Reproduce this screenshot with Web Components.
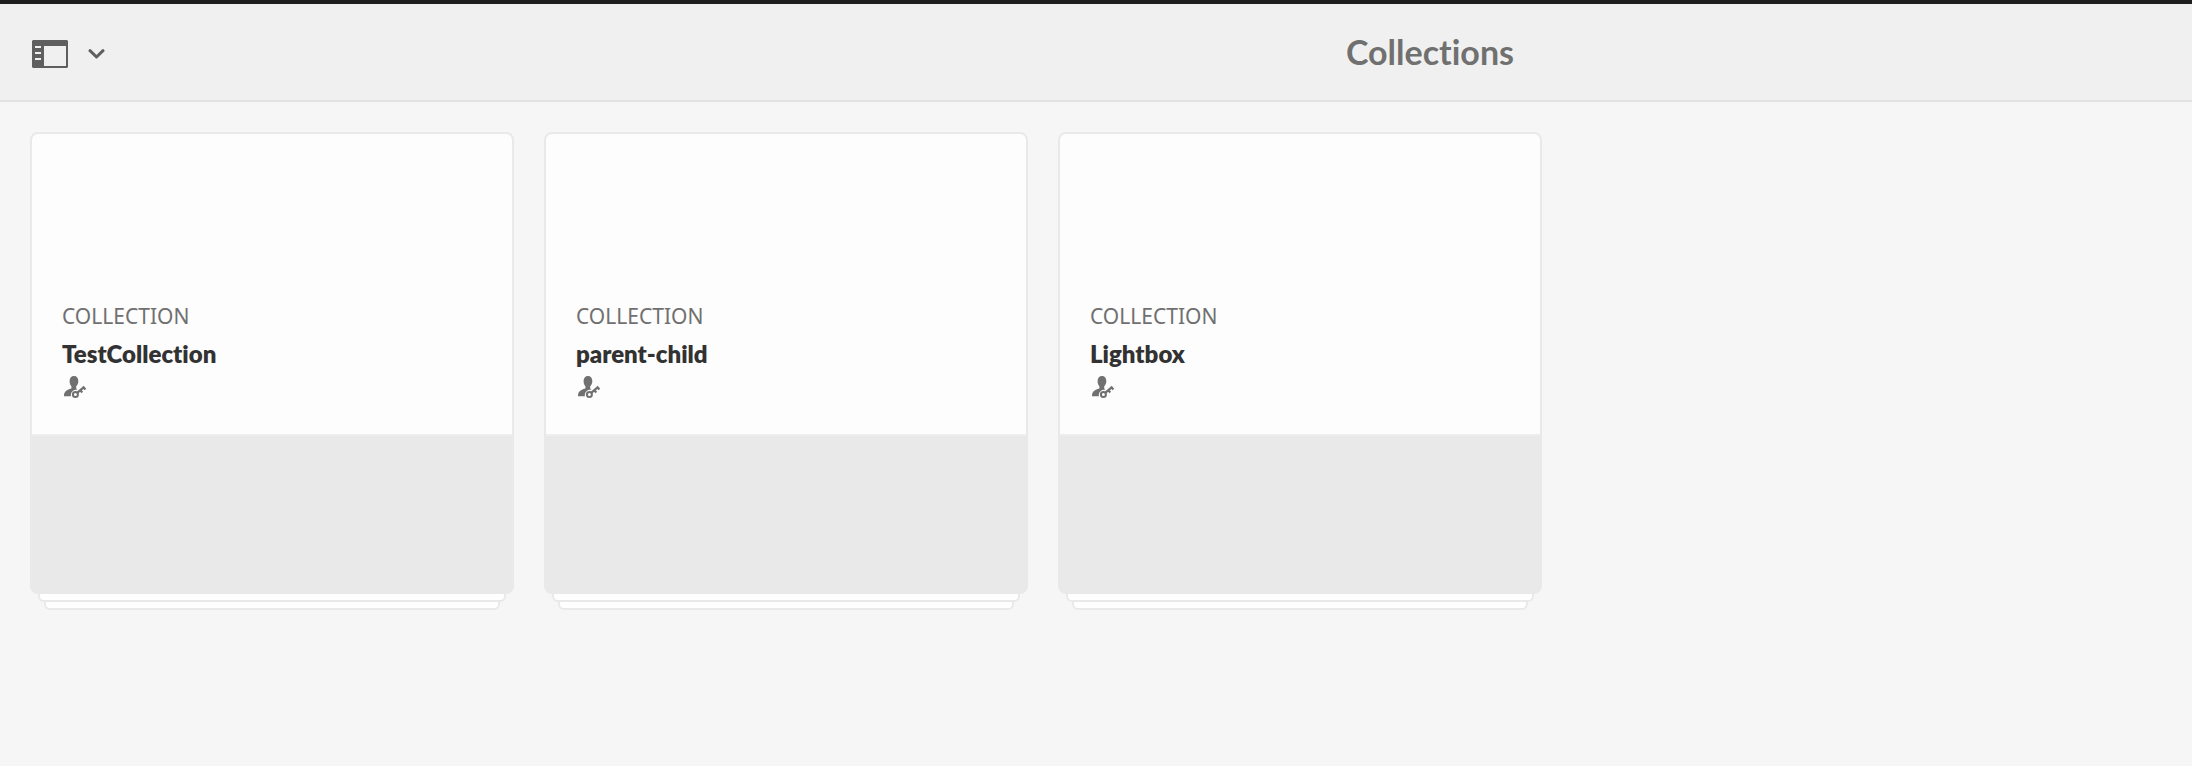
<!DOCTYPE html>
<html lang="en">
<head>
<meta charset="utf-8">
<title>Collections</title>
<style>
    body {
        margin: 0;
        min-height: 100vh;
        background: #f6f6f6;
        font-family: Lato, "Open Sans", sans-serif;
        font-variant-ligatures: none;
        --color-text: #323232;
        --color-muted: #707070;
        --color-icon: #5f5f5f;
        --color-border: #e9e9e9;
    }
</style>
</head>
<body>
<shell-header>Collections</shell-header>
<card-grid>
    <collection-card>TestCollection</collection-card>
    <collection-card>parent-child</collection-card>
    <collection-card>Lightbox</collection-card>
</card-grid>

<script>
class BaseElement extends HTMLElement {
    constructor() {
        super();
        this.attachShadow({mode: 'open'}).innerHTML = this.getTemplate();
    }
}

class RailToggle extends BaseElement {
    getTemplate() {
        return `
            <style>
                :host {
                    display: block;
                }

                button {
                    display: flex;
                    align-items: center;
                    gap: 20px;
                    padding: 0;
                    border: none;
                    background: none;
                    color: var(--color-icon);
                    cursor: pointer;
                }
            </style>
            <button type="button" aria-label="Toggle rail">
                <svg width="36" height="28" viewBox="0 0 36 28" fill="currentColor">
                    <path fill-rule="evenodd" d="M1 0H35L36 1V27L35 28H1L0 27V1ZM12 6V26H34V6ZM3 6V8H9V6ZM3 12V14H9V12ZM3 18V20H9V18Z"/>
                </svg>
                <svg width="17" height="10" viewBox="0 0 17 10" fill="none" stroke="currentColor" stroke-width="3" stroke-linecap="round" stroke-linejoin="round">
                    <path d="M2 1.7L8.5 8L15 1.7"/>
                </svg>
            </button>
        `;
    }
}

class ShellHeader extends BaseElement {
    getTemplate() {
        return `
            <style>
                :host {
                    display: grid;
                    grid-template-columns: 35fr 22fr;
                    align-items: center;
                    height: 96px;
                    border-top: 4px solid #1e1e1e;
                    border-bottom: 2px solid #e2e2e2;
                    background: #f0f0f0;
                }

                rail-toggle {
                    padding: 4px 0 0 32px;
                }

                h1 {
                    margin: 0;
                    font-size: 34px;
                    line-height: 40px;
                    font-weight: 700;
                    color: var(--color-muted);
                }
            </style>
            <rail-toggle></rail-toggle>
            <h1><slot></slot></h1>
        `;
    }
}

class CardGrid extends BaseElement {
    getTemplate() {
        return `
            <style>
                :host {
                    display: grid;
                    grid-template-columns: repeat(auto-fill, 484px);
                    gap: 30px;
                    padding: 30px;
                }
            </style>
            <slot></slot>
        `;
    }
}

class CollectionCard extends BaseElement {
    getTemplate() {
        return `
            <style>
                :host {
                    display: block;
                }

                .card {
                    overflow: hidden;
                    border: 2px solid var(--color-border);
                    border-radius: 8px;
                    background: var(--color-border);
                }

                .content {
                    display: flex;
                    flex-direction: column;
                    justify-content: flex-end;
                    box-sizing: border-box;
                    height: 300px;
                    padding: 0 30px 36px;
                    background: #fdfdfd;
                }

                .type {
                    font-family: "Noto Sans", "Open Sans", sans-serif;
                    font-size: 21px;
                    line-height: 40px;
                    color: var(--color-muted);
                }

                h2 {
                    margin: 0;
                    font-size: 24px;
                    line-height: 36px;
                    font-weight: 800;
                    color: var(--color-text);
                }

                svg {
                    display: block;
                    margin: 4px 2px 0;
                    color: var(--color-muted);
                }

                .info {
                    height: 156px;
                    border-top: 2px solid #eeeeee;
                }

                .sheet {
                    height: 6px;
                    margin: 0 8px;
                    border: 2px solid var(--color-border);
                    border-top: none;
                    border-radius: 0 0 6px 6px;
                    background: #fff;
                }

                .sheet + .sheet {
                    margin: 0 14px;
                }
            </style>
            <div class="card">
                <div class="content">
                    <div class="type">COLLECTION</div>
                    <h2><slot></slot></h2>
                    <svg width="22" height="22" viewBox="0 0 22 22">
                        <path fill="currentColor" d="M10 0C12.8 0 14.3 2 14.3 5C14.3 7.4 13.6 9 12.2 10.3V12.6L13.6 13.4C9.5 13.2 6.4 16 6.9 20.2H0C0 15.8 2 14.2 7.4 12.6V10.3C6.2 9 5.6 7.4 5.6 5C5.6 2 7.2 0 10 0Z"/>
                        <circle cx="11.4" cy="18.4" r="2.5" fill="none" stroke="currentColor" stroke-width="2"/>
                        <path fill="none" stroke="currentColor" stroke-width="2.2" d="M13.2 16.9L19.6 11.3L21.3 13.5M16.3 14.2L18.3 16.4"/>
                    </svg>
                </div>
                <div class="info"></div>
            </div>
            <div class="sheet"></div>
            <div class="sheet"></div>
        `;
    }
}

window.customElements.define('rail-toggle', RailToggle);
window.customElements.define('shell-header', ShellHeader);
window.customElements.define('card-grid', CardGrid);
window.customElements.define('collection-card', CollectionCard);
</script>
</body>
</html>
